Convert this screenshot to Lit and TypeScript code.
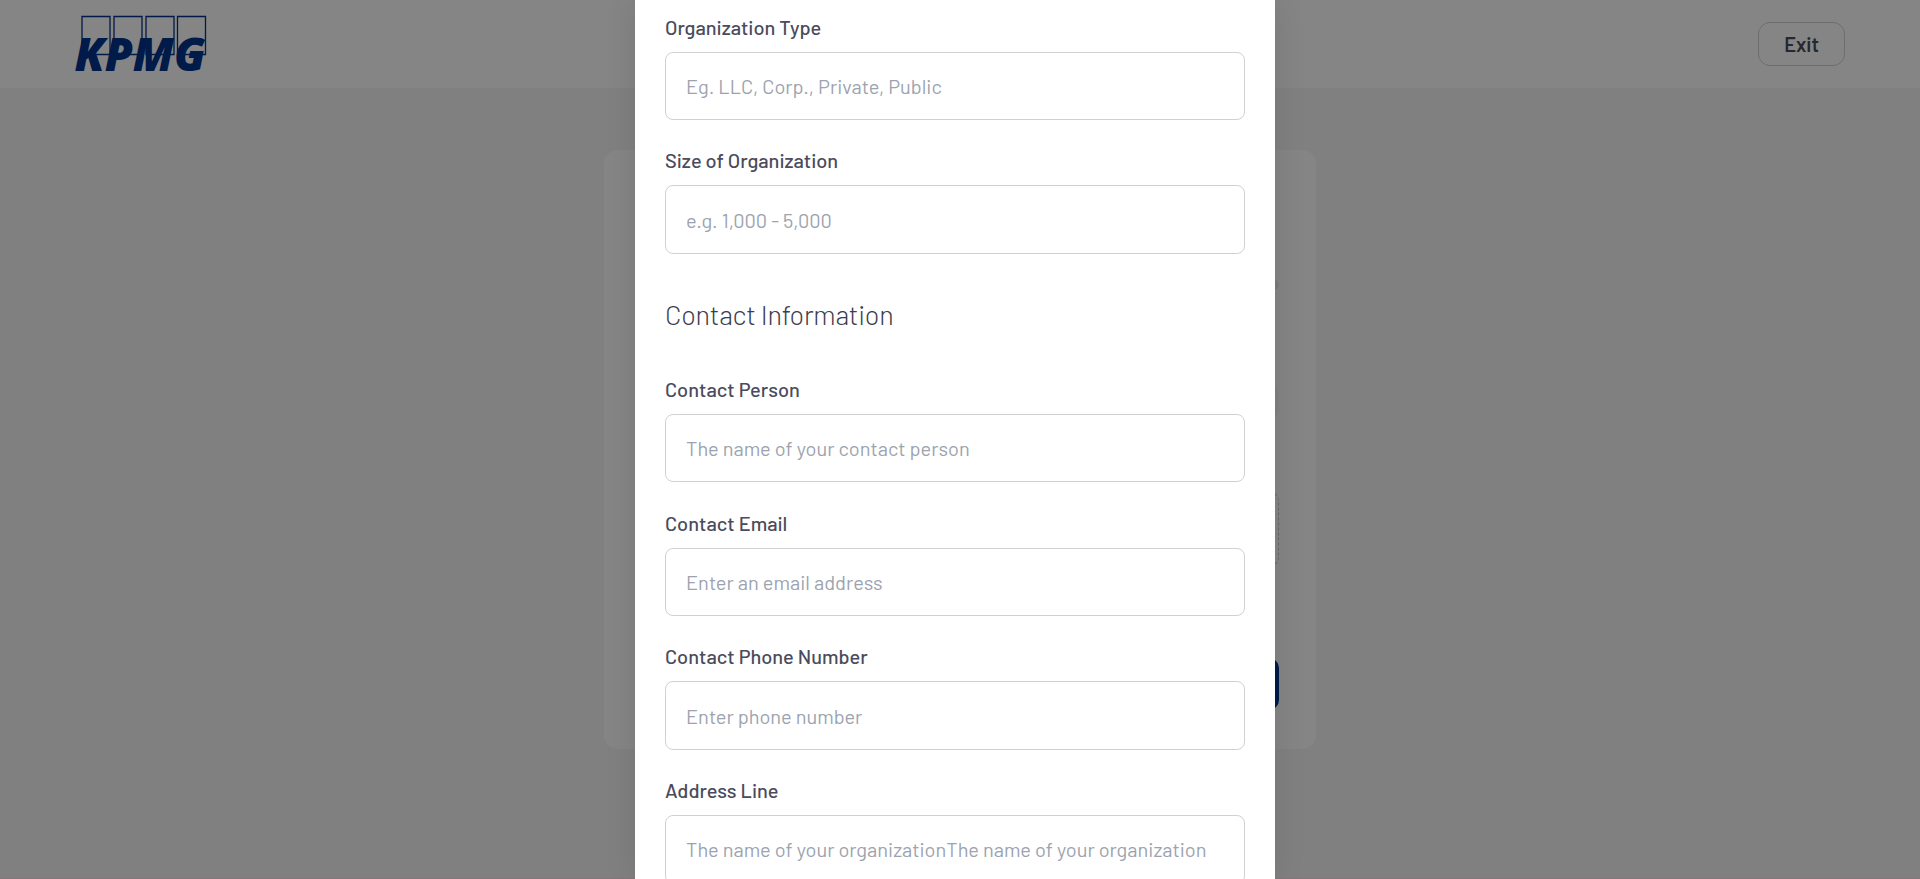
import { LitElement, html, css } from "lit";
import { customElement } from "lit/decorators.js";

interface Field { label: string; hint: string; }

const organization: Field[] = [
  { label: "Organization Type", hint: "Eg. LLC, Corp., Private, Public" },
  { label: "Size of Organization", hint: "e.g. 1,000 - 5,000" },
];
const contact: Field[] = [
  { label: "Contact Person", hint: "The name of your contact person" },
  { label: "Contact Email", hint: "Enter an email address" },
  { label: "Contact Phone Number", hint: "Enter phone number" },
  { label: "Address Line", hint: "The name of your organizationThe name of your organization" },
];

@customElement("app-root")
export class AppRoot extends LitElement {
  static styles = css`
    :host { display: block; position: relative; height: 879px; overflow: hidden; font-family: Barlow, Roboto, sans-serif; font-size: 20px; color: #4a4b5c; }
    * { box-sizing: border-box; }
    .page { height: 879px; background: #f6f6f6; }
    .header { height: 88px; background: #fff; display: flex; justify-content: space-between; align-items: center; padding: 0 75px 0 70px; }
    .logo { display: block; width: 144px; height: 72px; overflow: visible; }
    .exit { width: 87px; height: 44px; border: 1px solid #d2d2d2; border-radius: 12px; display: flex; align-items: center; justify-content: center; font-weight: 600; color: #4a4b5c; }
    .card { width: 712px; height: 599px; margin: 62px auto 0; border-radius: 14px; background: #fff; padding: 130px 37px 0; display: flex; flex-direction: column; }
    .bar { height: 10px; border-radius: 5px; background: #ececf4; }
    .row { height: 37px; margin-top: 93px; border-radius: 12px; background: #f8f8f8; }
    .drop { height: 76px; margin-top: 71px; border-radius: 10px; border: 1px dashed #c4c4c4; }
    .submit { height: 52px; margin-top: 91px; border-radius: 10px; background: #00338d; }
    .overlay { position: absolute; inset: 0; background: rgba(0,0,0,.48); display: flex; justify-content: center; padding-right: 10px; border-bottom: 1px solid rgba(140,80,105,.2); }
    .modal { width: 640px; height: 879px; background: #fff; padding: 7.7px 30px 0; overflow: hidden; box-shadow: 0 0 30px rgba(0,0,0,.1); }
    .field { height: 133.75px; }
    .label { display: block; height: 44px; padding-top: 3px; line-height: 32px; font-weight: 500; white-space: nowrap; }
    .box { height: 68.5px; border: 1px solid #d0d1d3; border-radius: 8px; padding: 0 20px; display: flex; align-items: center; color: #9ca3af; white-space: nowrap; }
    .title { margin: 0; height: 94.6px; padding-top: 19px; line-height: 40px; font-size: 27px; font-weight: 300; letter-spacing: -0.25px; color: #3c3d4e; }
  `;

  field(f: Field) {
    return html`<div class="field">
      <span class="label">${f.label}</span>
      <div class="box">${f.hint}</div>
    </div>`;
  }

  render() {
    return html`
      <div class="page">
        <header class="header">
          <svg class="logo" viewBox="70 8 144 72">
            <g fill="#fff" stroke="#00338d" stroke-width="1.3">
              <path d="M82 16.5h28v38h-28zM114 16.5h28v38h-28zM146 16.5h28v38h-28zM177.500 16.500h28v38h-28z" />
            </g>
            <text x="74.500" y="70.500" font-family="Open Sans" font-size="46" font-weight="800" font-style="italic" fill="#00338d" textLength="131" lengthAdjust="spacingAndGlyphs">KPMG</text>
          </svg>
          <div class="exit">Exit</div>
        </header>
        <main class="card">
          <div class="bar"></div><div class="row"></div><div class="drop"></div><div class="submit"></div>
        </main>
      </div>
      <div class="overlay">
        <section class="modal">
          ${organization.map((f) => this.field(f))}
          <h2 class="title">Contact Information</h2>
          ${contact.map((f) => this.field(f))}
        </section>
      </div>`;
  }
}
